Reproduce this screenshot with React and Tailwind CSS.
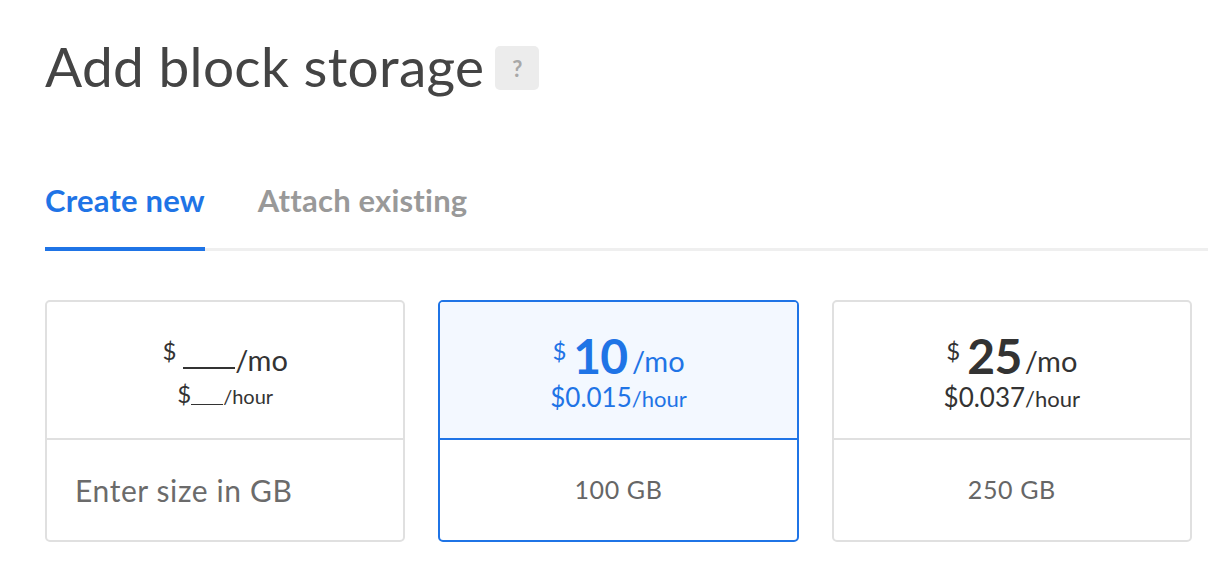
import React from "react";

const font = { fontFamily: "Lato, 'Open Sans', sans-serif" };

function PriceCard({ selected, children, bottom, left }) {
  return (
    <div
      className={`flex flex-col h-[242px] rounded-[5px] border-2 overflow-hidden ${
        selected ? "border-[#1f74e6]" : "border-[#e0e0e0]"
      }`}
    >
      <div
        className={`h-[138px] pt-[2px] flex flex-col items-center justify-center border-b-2 ${
          selected ? "bg-[#f3f8ff] border-[#1f74e6] text-[#1f74e6]" : "border-[#e0e0e0] text-[#333]"
        }`}
      >
        {children}
      </div>
      <div
        className={`flex-1 flex items-center ${
          left
            ? "justify-start pl-[28px] text-[30px] tracking-[0.6px] text-[#6b6b6b]"
            : "justify-center text-[25px] tracking-[0.6px] text-[#666]"
        }`}
      >
        {bottom}
      </div>
    </div>
  );
}

export default function App() {
  return (
    <div className="min-h-screen bg-white" style={font}>
      <div className="pl-[45px] pt-[32px]">
        <div className="flex items-center gap-[11px]">
          <h1 className="text-[55px] leading-[68px] text-[#444] font-normal tracking-[0.3px]">Add block storage</h1>
          <span className="w-[44px] h-[44px] mt-[4px] rounded-[5px] bg-[#ececec] text-[#a8a8a8] font-bold text-[22px] flex items-center justify-center">
            ?
          </span>
        </div>

        <div className="mt-[82px] flex border-b-[3px] border-[#efefef]">
          <div className="pb-[29px] -mb-[3px] border-b-4 border-[#1f74e6] text-[31px] font-bold text-[#1f74e6] leading-[36px] tracking-[0.2px]">
            Create new
          </div>
          <div className="ml-[53px] pb-[29px] text-[31px] font-bold text-[#999] leading-[36px] tracking-[0.2px]">
            Attach existing
          </div>
        </div>

        <div className="mt-[49px] grid grid-cols-3 gap-[33px] w-[1147px]">
          <PriceCard bottom="Enter size in GB" left>
            <div className="flex items-start leading-none">
              <span className="text-[24px] mt-[2px] mr-[7px]">$</span>
              <span className="w-[52px] border-b-2 border-[#333] h-[32px]"></span>
              <span className="text-[29px] mt-[8px]">/mo</span>
            </div>
            <div className="flex items-end leading-none mt-[8px]">
              <span className="text-[24px]">$</span>
              <span className="w-[32px] border-b border-[#333] mb-[1px] self-stretch"></span>
              <span className="text-[20px]">/hour</span>
            </div>
          </PriceCard>

          <PriceCard selected bottom="100 GB">
            <div className="flex items-start leading-none">
              <span className="text-[24px] mt-[7px] mr-[7px]">$</span>
              <span className="text-[48px] font-bold tracking-[-1px]">10</span>
              <span className="text-[29px] mt-[14px] ml-[5px]">/mo</span>
            </div>
            <div className="flex items-end leading-none mt-[4px]">
              <span className="text-[26px]">$0.015</span>
              <span className="text-[22px]">/hour</span>
            </div>
          </PriceCard>

          <PriceCard bottom="250 GB">
            <div className="flex items-start leading-none">
              <span className="text-[24px] mt-[7px] mr-[7px]">$</span>
              <span className="text-[48px] font-bold tracking-[-0.5px]">25</span>
              <span className="text-[29px] mt-[14px] ml-[3px]">/mo</span>
            </div>
            <div className="flex items-end leading-none mt-[4px]">
              <span className="text-[26px]">$0.037</span>
              <span className="text-[22px]">/hour</span>
            </div>
          </PriceCard>
        </div>
      </div>
    </div>
  );
}
